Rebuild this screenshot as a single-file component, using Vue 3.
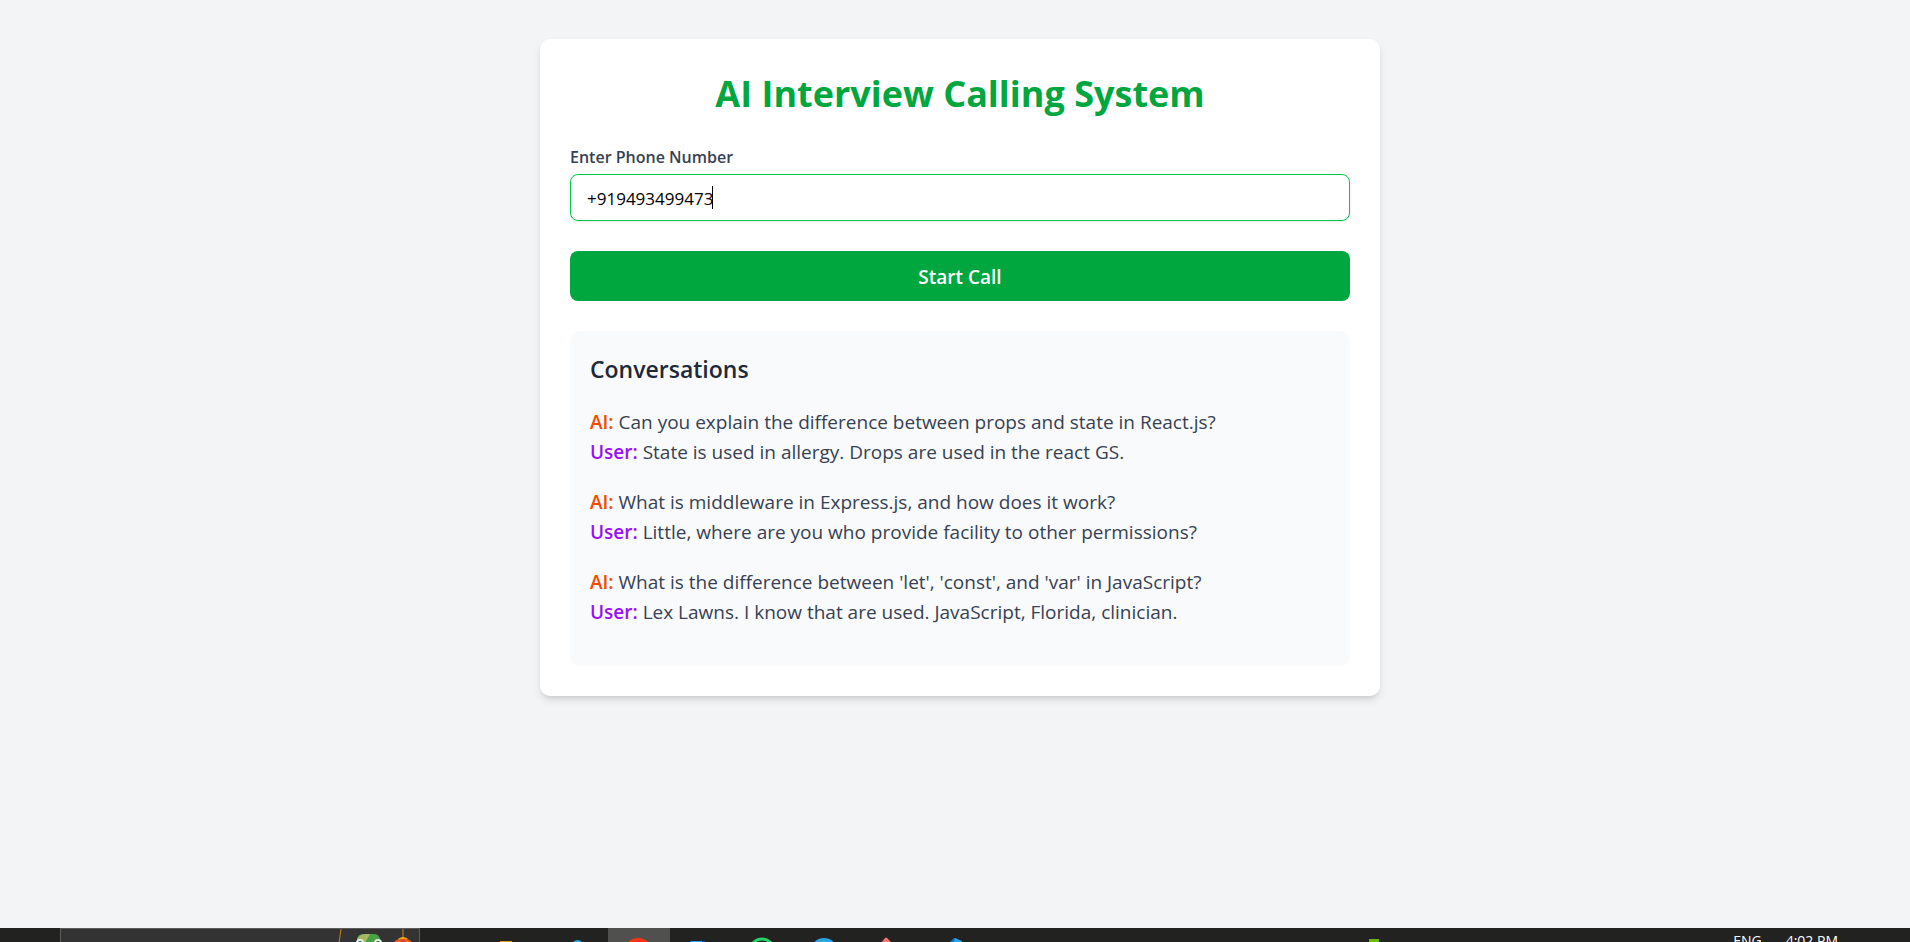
<script setup>
import { ref } from 'vue'

const phone = ref('+919493499473')

const conversations = [
  {
    ai: 'Can you explain the difference between props and state in React.js?',
    user: 'State is used in allergy. Drops are used in the react GS.',
  },
  {
    ai: 'What is middleware in Express.js, and how does it work?',
    user: 'Little, where are you who provide facility to other permissions?',
  },
  {
    ai: "What is the difference between 'let', 'const', and 'var' in JavaScript?",
    user: 'Lex Lawns. I know that are used. JavaScript, Florida, clinician.',
  },
]
</script>

<template>
  <div class="page">
    <main class="main">
      <section class="card">
        <h1 class="title">AI Interview Calling System</h1>
        <form class="form" @submit.prevent>
          <label class="label" for="phone">Enter Phone Number</label>
          <div class="field">
            <input id="phone" v-model="phone" class="input" type="text" />
            <span class="caret" aria-hidden="true"></span>
          </div>
          <button class="start" type="submit">Start Call</button>
        </form>
        <section class="conversations">
          <h2 class="heading">Conversations</h2>
          <div v-for="item in conversations" :key="item.ai" class="exchange">
            <p class="line"><strong class="ai">AI:</strong> {{ item.ai }}</p>
            <p class="line"><strong class="user">User:</strong> {{ item.user }}</p>
          </div>
        </section>
      </section>
    </main>

    <footer class="taskbar">
      <button class="search" type="button" aria-label="Search">
        <svg class="doodle" width="83" height="14" viewBox="0 0 83 14" aria-hidden="true">
          <path d="M5 0 L3 14 M67 0 V10" stroke="#c58414" stroke-width="1" fill="none" />
          <path d="M21 14 V9 Q23 5 28 5 H38 Q43 5 44 10 V14 Z" fill="#4aa044" />
          <path d="M21 11 Q23 5 30 5 H34 L29 14 H21 Z" fill="#a9b665" />
          <circle cx="24" cy="14" r="4" fill="#e8f5e4" />
          <circle cx="42" cy="14" r="4" fill="#e8f5e4" />
          <circle cx="24" cy="14" r="2" fill="#23632f" />
          <circle cx="42" cy="14" r="2" fill="#23632f" />
          <ellipse cx="67" cy="17" rx="10" ry="8" fill="#e0521c" />
          <path d="M62 10 Q67 6 72 10 Z" fill="#f3a51d" />
          <path d="M64 10 L62 14 M70 10 L72 14" stroke="#f47b32" />
        </svg>
      </button>
      <nav class="apps" aria-label="Pinned apps">
        <button class="app" type="button" aria-label="Files">
          <svg width="62" height="14" viewBox="0 0 62 14"><path d="M16 14 V13 H28 V14 Z" fill="#e0a21b" /></svg>
        </button>
        <button class="app" type="button" aria-label="Store">
          <svg width="62" height="14" viewBox="0 0 62 14"><path d="M27 14 Q32 10 36 14 Z" fill="#27a5e3" /></svg>
        </button>
        <button class="app active" type="button" aria-label="Browser">
          <svg width="62" height="14" viewBox="0 0 62 14"><circle cx="30" cy="24" r="14" fill="#ff3216" /></svg>
        </button>
        <button class="app" type="button" aria-label="Mail">
          <svg width="62" height="14" viewBox="0 0 62 14"><path d="M20 14 L21 13 H32 V14 Z" fill="#27a0e8" /><path d="M32 14 V13 H35 L36 14 Z" fill="#1739b5" /></svg>
        </button>
        <button class="app" type="button" aria-label="Calls">
          <svg width="62" height="14" viewBox="0 0 62 14"><circle cx="30" cy="23" r="12" fill="none" stroke="#25d366" stroke-width="3" /></svg>
        </button>
        <button class="app" type="button" aria-label="Messages">
          <svg width="62" height="14" viewBox="0 0 62 14"><circle cx="30" cy="24" r="14" fill="#2ba4e2" /></svg>
        </button>
        <button class="app" type="button" aria-label="Requests">
          <svg width="62" height="14" viewBox="0 0 62 14"><path d="M25 15 L29 10 Q30 9 31 10 L36 15 Z" fill="#ff7275" /></svg>
        </button>
        <button class="app" type="button" aria-label="Editor">
          <svg width="62" height="14" viewBox="0 0 62 14"><path d="M32 14 L36 10 H38 V14 Z" fill="#087bc4" /><path d="M37 10 L44 13 V14 H36 Z" fill="#27a5ee" /></svg>
        </button>
      </nav>
      <div class="tray">
        <svg width="10" height="14" viewBox="0 0 10 14" aria-hidden="true"><path d="M0 11 H10 V14 H0 Z" fill="#69b80c" /></svg>
        <span class="language">ENG</span>
        <span class="clock">4:02 PM</span>
      </div>
    </footer>
  </div>
</template>

<style>
body {
  margin: 0;
  background: #f3f4f6;
}
</style>

<style scoped>
* {
  box-sizing: border-box;
}
.page {
  display: flex;
  flex-direction: column;
  min-height: 100vh;
  background: #f3f4f6;
  font-family: "Segoe UI", "Open Sans", "Noto Sans", sans-serif;
}
.main {
  flex: 1;
  padding: 39px 20px 39px 30px;
}
.card {
  max-width: 840px;
  margin: 0 auto;
  padding: 30px;
  border-radius: 10px;
  background: #fff;
  box-shadow: 0 5px 8px -1px rgb(0 0 0 / 10%), 0 3px 5px -2px rgb(0 0 0 / 10%);
}
.title {
  margin: 0 0 26px;
  color: #00a63e;
  font-size: 36px;
  font-weight: 700;
  line-height: 49px;
  text-align: center;
}
.form {
  display: flex;
  flex-direction: column;
  margin-bottom: 30px;
}
.label {
  margin-bottom: 3px;
  color: #364153;
  font-size: 16px;
  font-weight: 600;
  line-height: 27px;
}
.field {
  position: relative;
  margin-bottom: 30px;
}
.input {
  display: block;
  width: 100%;
  height: 47px;
  padding: 2px 16px 0;
  border: 1px solid #00c950;
  border-radius: 8px;
  outline: none;
  background: #fff;
  box-shadow: 0 1px 3px rgb(0 0 0 / 10%);
  color: #000;
  font-family: inherit;
  font-size: 17px;
}
.caret {
  position: absolute;
  top: 12px;
  left: 142px;
  width: 1px;
  height: 23px;
  background: #000;
}
.start {
  height: 50px;
  padding: 2px 0 0;
  border: 0;
  border-radius: 8px;
  background: #00a63e;
  color: #fff;
  font-family: inherit;
  font-size: 19px;
  font-weight: 600;
  line-height: 30px;
}
.conversations {
  padding: 21px 20px 19px;
  border-radius: 10px;
  background: #f9fafb;
}
.heading {
  margin: 0 0 20px;
  color: #1e2939;
  font-size: 23px;
  font-weight: 600;
  line-height: 35px;
}
.exchange {
  margin-bottom: 20px;
}
.line {
  margin: 0;
  color: #364153;
  font-size: 19px;
  line-height: 30px;
}
.line strong {
  font-weight: 600;
}
.ai {
  color: #f54900;
}
.user {
  color: #9810fa;
}
.taskbar {
  display: flex;
  height: 14px;
  padding-left: 60px;
  overflow: hidden;
  background: #222321;
}
.search {
  display: flex;
  flex: none;
  justify-content: flex-end;
  width: 360px;
  padding: 0;
  border: 1px solid #5c5c5c;
  border-bottom: 0;
  background: #333;
}
.doodle {
  flex: none;
}
.apps {
  display: flex;
  margin-left: 64px;
}
.app {
  display: flex;
  width: 62px;
  padding: 0;
  border: 0;
  background: transparent;
}
.app svg {
  flex: none;
}
.active {
  background: #50504f;
}
.tray {
  display: flex;
  margin-left: auto;
  padding-right: 72px;
  color: #fff;
  font-size: 14px;
  line-height: 26px;
}
.language {
  margin-left: 354px;
}
.clock {
  margin-left: 24px;
}
</style>
